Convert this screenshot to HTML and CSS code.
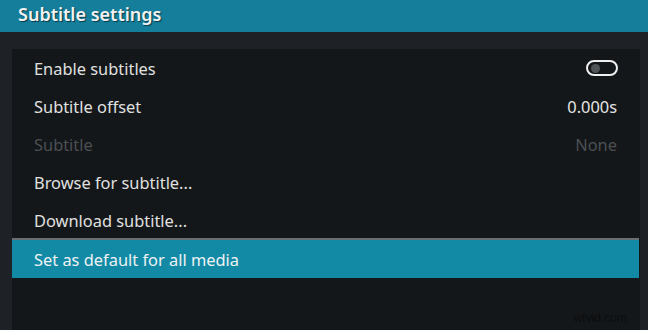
FILE: index.html
```html
<!DOCTYPE html>
<html>
<head>
<meta charset="utf-8">
<link rel="stylesheet" href="styles.css">
</head>
<body>
<div class="screen">
  <header class="titlebar"><h1 class="title">Subtitle settings</h1></header>
  <main class="content">
    <ul class="panel">
      <li class="row"><span class="label">Enable subtitles</span><span class="toggle"><span class="knob"></span></span></li>
      <li class="row"><span class="label">Subtitle offset</span><span class="value">0.000s</span></li>
      <li class="row disabled"><span class="label">Subtitle</span><span class="value">None</span></li>
      <li class="row"><span class="label">Browse for subtitle...</span></li>
      <li class="row"><span class="label">Download subtitle...</span></li>
      <li class="row focused"><span class="label">Set as default for all media</span></li>
    </ul>
    <div class="watermark">wtvid.com</div>
  </main>
</div>
</body>
</html>
```

FILE: styles.css
```css
* { box-sizing: border-box; }
html, body { margin: 0; padding: 0; }
body {
  width: 648px;
  height: 330px;
  overflow: hidden;
  background: #1e2226;
  font-family: "Noto Sans", "Open Sans", sans-serif;
}
.screen { display: flex; flex-direction: column; height: 330px; }
.titlebar {
  height: 32px;
  background: #147e9b;
  display: flex;
  align-items: center;
  padding-left: 18px;
}
.title {
  margin: 0;
  font-size: 18px;
  font-weight: 600;
  color: #f2f2f2;
  text-shadow: 1px 1px 1px rgba(0,0,0,0.55);
  line-height: 1;
  position: relative;
  top: -2px;
}
.content {
  flex: 1;
  padding: 17px 8px 0 12px;
  position: relative;
}
.panel {
  list-style: none;
  margin: 0;
  padding: 0;
  height: 100%;
  background: #141719;
}
.row {
  height: 38px;
  display: flex;
  align-items: center;
  justify-content: space-between;
  padding: 0 23px 0 22px;
  font-size: 16.4px;
  color: #e0e0e0;
}
.row.disabled { color: #4b4f53; }
.row.focused {
  margin-top: 1px;
  margin-right: 1px;
  background: #128aa6;
  box-shadow: 0 -2px 0 #6b6e70;
  color: #eef2f4;
}
.value { color: #e4e4e4; }
.row.disabled .value { color: #4b4f53; }
.toggle {
  width: 32px;
  height: 16px;
  border: 2px solid #f0f0f0;
  border-radius: 8px;
  display: flex;
  align-items: center;
  padding-left: 3px;
  margin-right: -1px;
}
.knob {
  width: 9px;
  height: 9px;
  border-radius: 50%;
  background: #505457;
}
.watermark {
  position: absolute;
  right: 21px;
  bottom: 5px;
  font-family: "Liberation Sans", sans-serif;
  font-size: 12px;
  color: #0b0d0e;
}
```
